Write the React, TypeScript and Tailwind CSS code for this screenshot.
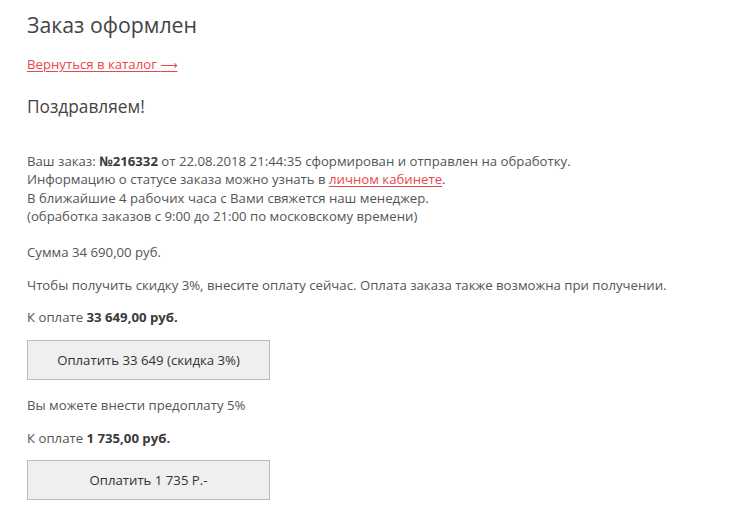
export default function App() {
  return (
    <div className="min-h-screen bg-white px-[27px] pt-[11px] text-[13.2px] leading-[18px] text-[#555] [font-family:'Open_Sans',sans-serif]">
      <h1 className="text-[21.3px] leading-[28px] text-[#444]">Заказ оформлен</h1>
      <a href="#" className="mt-[16px] block h-[18px] w-fit text-[#e8484b] underline underline-offset-2">
        Вернуться в каталог <span className="text-[12px] leading-none [font-family:'DejaVu_Sans',sans-serif]">⟶</span>
      </a>
      <h2 className="mt-[22px] text-[17.3px] leading-[24px] text-[#444]">Поздравляем!</h2>

      <p className="mt-[33px] leading-[18.4px]">
        Ваш заказ: <b className="text-[#3a3a3a]">№216332</b> от 22.08.2018 21:44:35 сформирован и отправлен на обработку.
        <br />
        Информацию о статусе заказа можно узнать в{" "}
        <a href="#" className="text-[#e8484b] underline underline-offset-2">личном кабинете</a>.
        <br />
        В ближайшие 4 рабочих часа с Вами свяжется наш менеджер.
        <br />
        (обработка заказов с 9:00 до 21:00 по московскому времени)
      </p>

      <p className="mt-[17px]">Сумма 34 690,00 руб.</p>
      <p className="mt-[15px]">Чтобы получить скидку 3%, внесите оплату сейчас. Оплата заказа также возможна при получении.</p>
      <p className="mt-[14px]">
        К оплате <b className="text-[#3a3a3a]">33 649,00 руб.</b>
      </p>
      <button className="mt-[14px] flex h-[40px] w-[243px] items-center justify-center border border-[#bbb] bg-[#efefef] text-[#333]">
        Оплатить 33 649 (скидка 3%)
      </button>

      <p className="mt-[16px]">Вы можете внести предоплату 5%</p>
      <p className="mt-[15px]">
        К оплате <b className="text-[#3a3a3a]">1 735,00 руб.</b>
      </p>
      <button className="mt-[13px] flex h-[40px] w-[243px] items-center justify-center border border-[#bbb] bg-[#efefef] text-[#333]">
        Оплатить 1 735 Р.-
      </button>
    </div>
  );
}
